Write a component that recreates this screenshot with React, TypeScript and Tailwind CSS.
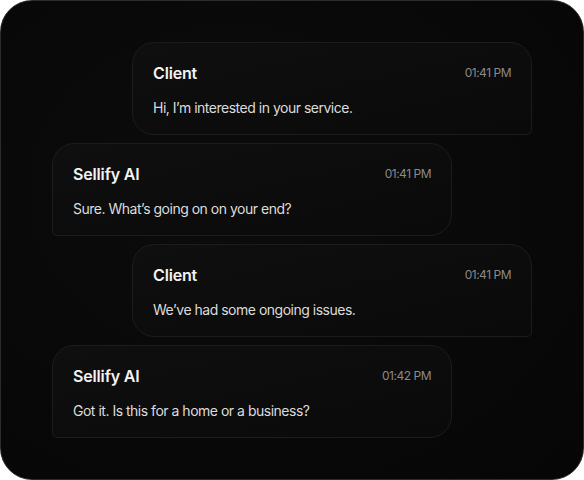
const messages = [
  { from: "Client", time: "01:41 PM", text: "Hi, I’m interested in your service." },
  { from: "Sellify AI", time: "01:41 PM", text: "Sure. What’s going on on your end?" },
  { from: "Client", time: "01:41 PM", text: "We’ve had some ongoing issues." },
  { from: "Sellify AI", time: "01:42 PM", text: "Got it. Is this for a home or a business?" },
];

const Bubble = ({ from, time, text }: { from: string; time: string; text: string }) => {
  const isClient = from === "Client";
  return (
    <div
      className={
        isClient
          ? "self-end w-[400px] h-[93px] rounded-[22px] rounded-br-[5px] border border-[#1c1c1c] bg-gradient-to-br from-[#0f0f0f] to-[#0a0a0a] px-5 pt-[20px]"
          : "self-start w-[400px] h-[93px] rounded-[22px] rounded-bl-[5px] border border-[#1c1c1c] bg-gradient-to-br from-[#0f0f0f] to-[#0a0a0a] px-5 pt-[20px]"
      }
    >
      <div className="flex items-center justify-between">
        <span className="text-[16px] leading-5 font-semibold tracking-[-0.01em] text-[#f3f3f3]">{from}</span>
        <span className="text-[12px] leading-5 tracking-[-0.04em] text-[#8a8a8a]">{time}</span>
      </div>
      <p className="mt-[15px] text-[14px] leading-5 tracking-[-0.035em] text-[#dcdcdc]">{text}</p>
    </div>
  );
};

export default function App() {
  return (
    <div className="bg-white w-[584px] h-[480px]" style={{ fontFamily: "Inter, 'Noto Sans', sans-serif" }}>
      <div className="w-full h-full rounded-[32px] border border-[#2c2c2c] bg-[radial-gradient(ellipse_at_40%_40%,#0c0c0c,#060606)] flex flex-col gap-[8px] pt-[41px] pl-[51px] pr-[51px]">
        {messages.map((m, i) => (
          <Bubble key={i} {...m} />
        ))}
      </div>
    </div>
  );
}
